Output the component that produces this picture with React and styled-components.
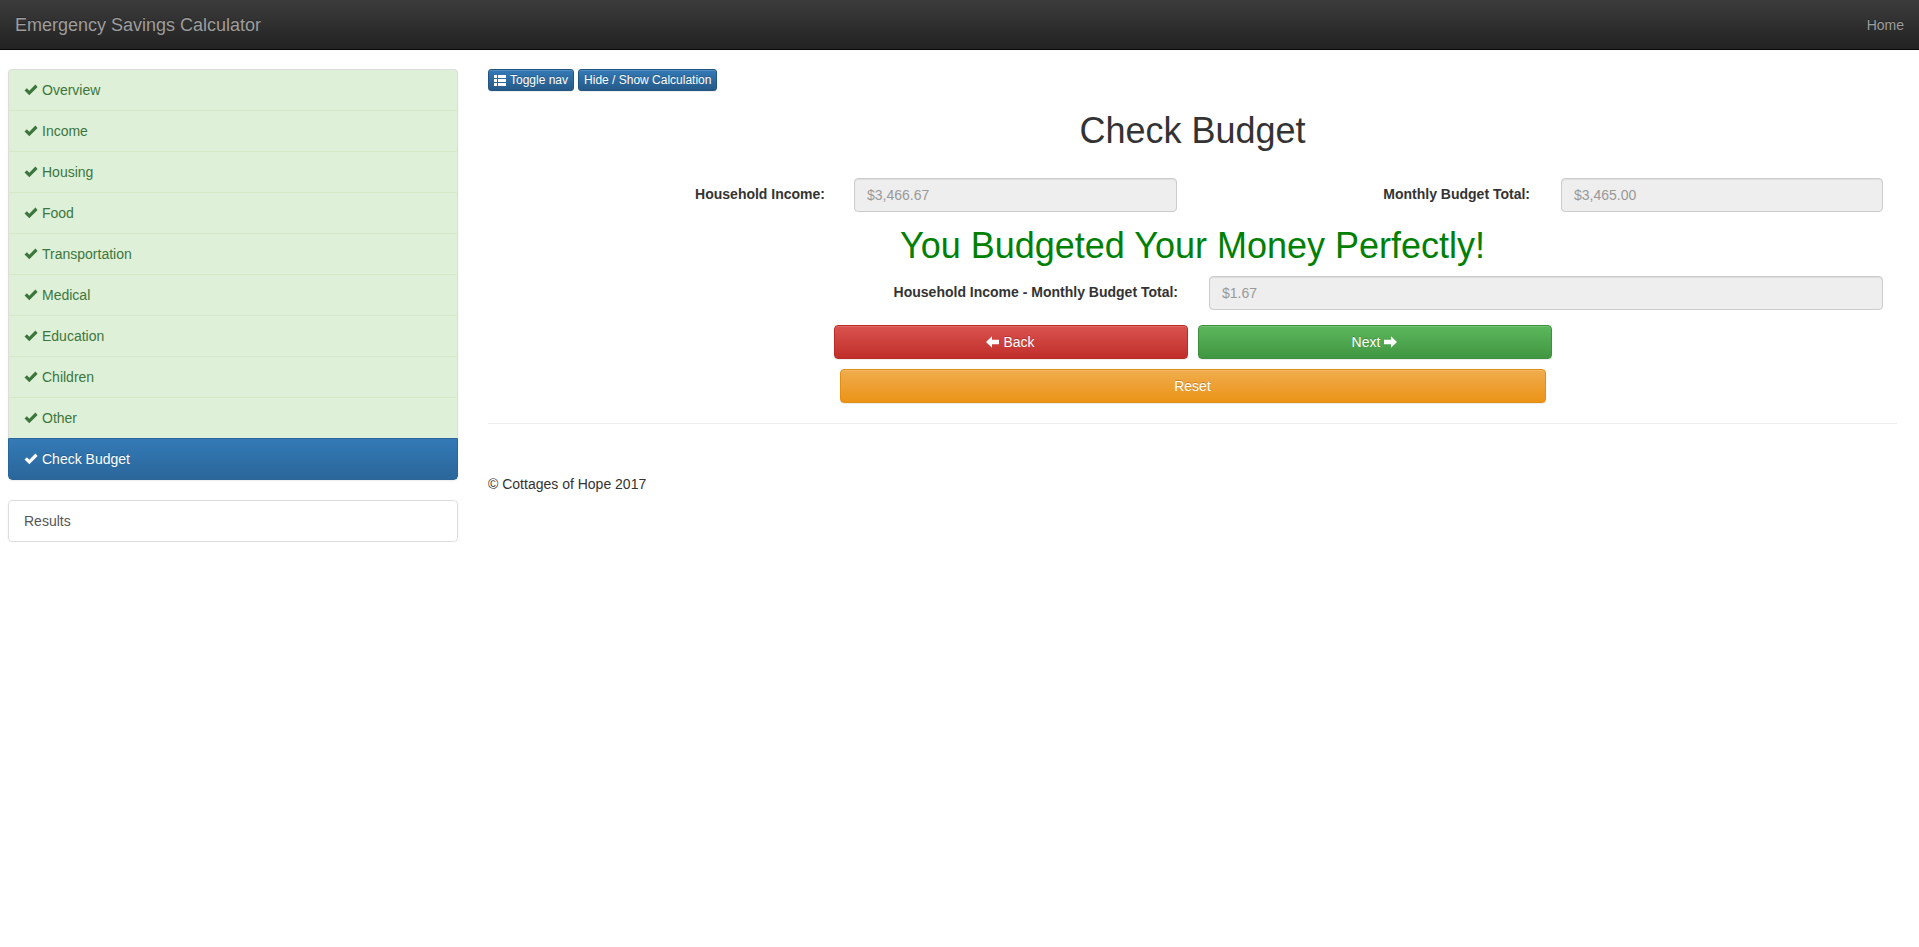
import styled, { createGlobalStyle } from "styled-components";

const GlobalStyle = createGlobalStyle`
  * { box-sizing: border-box; }
  body {
    margin: 0;
    background: #fff;
    color: #333;
    font-family: "Liberation Sans", Arial, Helvetica, sans-serif;
    font-size: 14px;
    line-height: 1.42857;
  }
`;

const steps = [
  "Overview",
  "Income",
  "Housing",
  "Food",
  "Transportation",
  "Medical",
  "Education",
  "Children",
  "Other",
  "Check Budget",
];

const OkIcon = () => (
  <svg width="14" height="12" viewBox="0 0 14 12">
    <path d="M0.5 6.6 L2.9 4.3 L5.3 6.7 L11.4 0.6 L13.6 2.9 L5.3 11.2 Z" fill="currentColor" />
  </svg>
);

const ListIcon = () => (
  <svg width="12" height="11" viewBox="0 0 12 11">
    <rect x="0" y="0" width="3" height="3" fill="currentColor" />
    <rect x="4" y="0" width="8" height="3" fill="currentColor" />
    <rect x="0" y="4" width="3" height="3" fill="currentColor" />
    <rect x="4" y="4" width="8" height="3" fill="currentColor" />
    <rect x="0" y="8" width="3" height="3" fill="currentColor" />
    <rect x="4" y="8" width="8" height="3" fill="currentColor" />
  </svg>
);

const ArrowIcon = ({ dir }) => (
  <svg width="13" height="12" viewBox="0 0 13 12">
    <path
      d="M0 6 L6 0.3 L6 3.8 L13 3.8 L13 8.2 L6 8.2 L6 11.7 Z"
      fill="currentColor"
      transform={dir === "right" ? "translate(13 0) scale(-1 1)" : undefined}
    />
  </svg>
);

const App = () => {
  return (
    <>
      <GlobalStyle />
      <Navbar>
        <Brand>Emergency Savings Calculator</Brand>
        <NavLink>Home</NavLink>
      </Navbar>
      <Page>
        <Sidebar>
          <ListGroup>
            {steps.map((s) => (
              <ListItem key={s} $active={s === "Check Budget"}>
                <OkIcon />
                <span>{s}</span>
              </ListItem>
            ))}
          </ListGroup>
          <ListGroup>
            <PlainItem>Results</PlainItem>
          </ListGroup>
        </Sidebar>
        <Main>
          <Toolbar>
            <SmallButton>
              <ListIcon />
              Toggle nav
            </SmallButton>
            <SmallButton>Hide / Show Calculation</SmallButton>
          </Toolbar>
          <Title>Check Budget</Title>
          <TotalsRow>
            <Label $pad={29}>Household Income:</Label>
            <Field disabled value="$3,466.67" readOnly />
            <Label $pad={31}>Monthly Budget Total:</Label>
            <Field disabled value="$3,465.00" readOnly />
          </TotalsRow>
          <Message>You Budgeted Your Money Perfectly!</Message>
          <DiffRow>
            <Label $pad={31}>Household Income - Monthly Budget Total:</Label>
            <Field disabled value="$1.67" readOnly />
          </DiffRow>
          <ButtonRow>
            <BigButton $variant="danger">
              <ArrowIcon dir="left" />
              Back
            </BigButton>
            <BigButton $variant="success">
              Next
              <ArrowIcon dir="right" />
            </BigButton>
          </ButtonRow>
          <ButtonRow>
            <BigButton $variant="warning" $wide>
              Reset
            </BigButton>
          </ButtonRow>
          <Rule />
          <Footer>© Cottages of Hope 2017</Footer>
        </Main>
      </Page>
    </>
  );
};

const Navbar = styled.div`
  display: flex;
  align-items: center;
  justify-content: space-between;
  height: 50px;
  padding: 0 15px;
  background-image: linear-gradient(to bottom, #3c3c3c 0, #222 100%);
  border-bottom: 1px solid #080808;
`;

const Brand = styled.div`
  color: #9d9d9d;
  font-size: 18px;
  line-height: 20px;
  text-shadow: 0 -1px 0 rgba(0, 0, 0, 0.25);
`;

const NavLink = styled.a`
  color: #9d9d9d;
  font-size: 14px;
  line-height: 20px;
  text-shadow: 0 -1px 0 rgba(0, 0, 0, 0.25);
  cursor: pointer;
`;

const Page = styled.div`
  display: flex;
  align-items: flex-start;
  gap: 30px;
  padding: 19px 22px 0 8px;
`;

const Sidebar = styled.div`
  width: 450px;
  flex-shrink: 0;
  display: flex;
  flex-direction: column;
  gap: 20px;
`;

const ListGroup = styled.div`
  border-radius: 4px;
  box-shadow: 0 1px 2px rgba(0, 0, 0, 0.075);
  overflow: hidden;
`;

const ListItem = styled.div`
  display: flex;
  align-items: center;
  gap: 4px;
  padding: 10px 15px;
  line-height: 20px;
  margin-bottom: -1px;
  border: 1px solid ${(p) => (p.$active ? "#2b669a" : "#d6e9c6")};
  border-left-color: ${(p) => (p.$active ? "#2b669a" : "#ddd")};
  border-right-color: ${(p) => (p.$active ? "#2b669a" : "#ddd")};
  background: ${(p) =>
    p.$active ? "linear-gradient(to bottom, #337ab7 0, #2b669a 100%)" : "#dff0d8"};
  color: ${(p) => (p.$active ? "#fff" : "#3c763d")};
  text-shadow: ${(p) => (p.$active ? "0 -1px 0 #286090" : "none")};
  position: relative;
  z-index: ${(p) => (p.$active ? 2 : 1)};

  &:first-child {
    border-top-color: #ddd;
    border-radius: 4px 4px 0 0;
  }
  &:last-child {
    margin-bottom: 0;
    border-radius: 0 0 4px 4px;
  }
  svg {
    margin-top: -1px;
  }
`;

const PlainItem = styled.div`
  padding: 10px 15px;
  line-height: 20px;
  border: 1px solid #ddd;
  border-radius: 4px;
  color: #555;
  background: #fff;
`;

const Main = styled.div`
  flex: 1;
  min-width: 0;
`;

const Toolbar = styled.div`
  display: flex;
  gap: 4px;
`;

const SmallButton = styled.button`
  display: inline-flex;
  align-items: center;
  gap: 4px;
  height: 22px;
  padding: 1px 5px;
  font-family: inherit;
  font-size: 12px;
  line-height: 18px;
  color: #fff;
  border: 1px solid #245580;
  border-radius: 3px;
  background-image: linear-gradient(to bottom, #337ab7 0, #265a88 100%);
  text-shadow: 0 -1px 0 rgba(0, 0, 0, 0.2);
  box-shadow: inset 0 1px 0 rgba(255, 255, 255, 0.15), 0 1px 1px rgba(0, 0, 0, 0.075);
  cursor: pointer;
`;

const Title = styled.h1`
  margin: 20px 0 0;
  font-size: 36px;
  font-weight: 500;
  line-height: 1.1;
  text-align: center;
  color: #333;
`;

const TotalsRow = styled.div`
  display: grid;
  grid-template-columns: 366px 323px 384px 322px;
  align-items: center;
  margin-top: 27px;
`;

const DiffRow = styled.div`
  display: grid;
  grid-template-columns: 721px 674px;
  align-items: center;
`;

const Label = styled.label`
  text-align: right;
  padding-right: ${(p) => p.$pad}px;
  font-weight: bold;
  color: #333;
`;

const Field = styled.input`
  display: block;
  width: 100%;
  height: 34px;
  padding: 6px 12px;
  font-family: inherit;
  font-size: 14px;
  line-height: 20px;
  color: #999;
  background: #eee;
  border: 1px solid #ccc;
  border-radius: 4px;
  box-shadow: inset 0 1px 1px rgba(0, 0, 0, 0.075);
  opacity: 1;
  -webkit-text-fill-color: #999;
`;

const Message = styled.h1`
  margin: 14px 0 11px;
  font-size: 36px;
  font-weight: 500;
  line-height: 1.1;
  text-align: center;
  color: green;
`;

const variants = {
  danger: { from: "#d9534f", to: "#c12e2a", border: "#b92c28" },
  success: { from: "#5cb85c", to: "#419641", border: "#3e8f3e" },
  warning: { from: "#f0ad4e", to: "#eb9316", border: "#e38d13" },
};

const ButtonRow = styled.div`
  display: flex;
  justify-content: center;
  gap: 10px;
  margin-top: 15px;

  & + & {
    margin-top: 10px;
  }
`;

const BigButton = styled.button`
  display: inline-flex;
  align-items: center;
  justify-content: center;
  gap: 4px;
  width: ${(p) => (p.$wide ? "706px" : "354px")};
  height: 34px;
  padding: 6px 12px;
  font-family: inherit;
  font-size: 14px;
  line-height: 20px;
  color: #fff;
  border: 1px solid ${(p) => variants[p.$variant].border};
  border-radius: 4px;
  background-image: linear-gradient(
    to bottom,
    ${(p) => variants[p.$variant].from} 0,
    ${(p) => variants[p.$variant].to} 100%
  );
  text-shadow: 0 -1px 0 rgba(0, 0, 0, 0.2);
  box-shadow: inset 0 1px 0 rgba(255, 255, 255, 0.15), 0 1px 1px rgba(0, 0, 0, 0.075);
  cursor: pointer;
`;

const Rule = styled.hr`
  margin: 20px 0 0;
  border: 0;
  border-top: 1px solid #eee;
`;

const Footer = styled.footer`
  margin-top: 50px;
  line-height: 20px;
  color: #333;
`;

export default App;
